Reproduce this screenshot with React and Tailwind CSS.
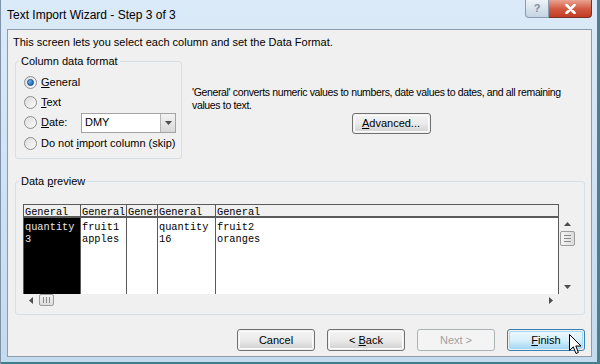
import React from 'react';

const ui = { fontFamily: '"Liberation Sans", Arial, sans-serif' };
const mono = { fontFamily: '"Liberation Mono", "Courier New", monospace' };

const Radio = ({ checked }) => (
  <span className="w-[13px] h-[13px] rounded-full border border-[#8f8f8f] bg-gradient-to-br from-[#dcdcdc] to-[#fbfbfb] flex items-center justify-center shrink-0">
    {checked && <span className="w-[7px] h-[7px] rounded-full bg-gradient-to-br from-[#7fc3f5] to-[#0f5aa8] border border-[#0b4b8c]" />}
  </span>
);

const Btn = ({ children, variant }) => {
  if (variant === 'disabled') {
    return (
      <div className="w-[78px] h-[22px] rounded-[3px] border border-[#adb2b5] bg-[#f4f4f4] flex items-center justify-center text-[11px] text-[#a0a0a0]">
        <span>{children}</span>
      </div>
    );
  }
  if (variant === 'focus') {
    return (
      <div className="w-[78px] h-[22px] rounded-[3px] border border-[#3c7fb1] p-[1px] flex">
        <div className="flex-1 rounded-[2px] border border-[#a8d8f7] bg-gradient-to-b from-[#eaf6fd] via-[#d9f0fc] to-[#a7d9f5] flex items-center justify-center text-[11px] text-black">
          <span>{children}</span>
        </div>
      </div>
    );
  }
  return (
    <div className="w-[78px] h-[22px] rounded-[3px] border border-[#707070] p-[1px] flex">
      <div className="flex-1 rounded-[2px] border border-[#fbfbfb] bg-gradient-to-b from-[#f2f2f2] via-[#ebebeb] to-[#d4d4d4] flex items-center justify-center text-[11px] text-black">
        <span>{children}</span>
      </div>
    </div>
  );
};

const Arrow = ({ dir }) => {
  const pts = {
    up: '0,4 3.5,0 7,4',
    down: '0,0 3.5,4 7,0',
    left: '4,0 0,3.5 4,7',
    right: '0,0 4,3.5 0,7',
  }[dir];
  const vertical = dir === 'up' || dir === 'down';
  return (
    <svg width={vertical ? 7 : 4} height={vertical ? 4 : 7} viewBox={vertical ? '0 0 7 4' : '0 0 4 7'}>
      <polygon points={pts} fill="#4d4d4d" />
    </svg>
  );
};

const columns = [
  { w: 'w-[57px]', head: 'General', rows: ['quantity', '3'], dark: true },
  { w: 'w-[46px]', head: 'General', rows: ['fruit1', 'apples'] },
  { w: 'w-[31px]', head: 'Gener', rows: ['', ''] },
  { w: 'w-[58px]', head: 'General', rows: ['quantity', '16'] },
  { w: 'flex-1', head: 'General', rows: ['fruit2', 'oranges'] },
];

export default function App() {
  return (
    <div className="w-[600px] h-[364px] overflow-hidden relative flex flex-col bg-gradient-to-b from-[#dbeaf8] to-[#c4daef] border-l border-[#7f93a8] border-r-[3px] border-r-[#4b7f8d]" style={ui}>
      {/* title bar */}
      <div className="h-[29px] flex justify-between items-start shrink-0">
        <div className="h-[29px] flex items-center pl-[6px] text-[12px] text-black">Text Import Wizard - Step 3 of 3</div>
        <div className="flex pr-[5px]">
          <div className="w-[24px] h-[18px] rounded-bl-[4px] border border-t-0 border-[#8a9cb0] bg-gradient-to-b from-[#eef3f8] to-[#c4d3e2] flex items-center justify-center text-[11px] text-[#7d8ea0] font-bold">?</div>
          <div className="w-[43px] h-[18px] rounded-br-[4px] border border-t-0 border-l-0 border-[#7a3025] bg-gradient-to-b from-[#e8a394] via-[#d45b44] to-[#c23b22] flex items-center justify-center">
            <svg width="11" height="10" viewBox="0 0 11 10">
              <path d="M1.5 1 L9.5 9 M9.5 1 L1.5 9" stroke="#ffffff" strokeWidth="2.6" strokeLinecap="round" />
            </svg>
          </div>
        </div>
      </div>

      {/* client */}
      <div className="ml-[6px] mr-[5px] h-[328px] shrink-0 border border-[#8d9cab] bg-[#f0f0f0] flex flex-col text-[11px] text-black">
        <div className="pl-[5px] pt-[5px] leading-[15px]">This screen lets you select each column and set the Data Format.</div>

        <div className="flex mt-[4px]">
          <fieldset className="ml-[7px] w-[167px] h-[105px] border border-[#d5dfe5] rounded-[3px] shrink-0">
            <legend className="ml-[3px] px-[2px] leading-[15px]">Column data format</legend>
            <div className="flex flex-col pl-[8px] pt-[4px]">
              <div className="h-[19px] flex items-center gap-[4px]">
                <Radio checked />
                <span><u>G</u>eneral</span>
              </div>
              <div className="h-[20px] flex items-center gap-[4px]">
                <Radio />
                <span><u>T</u>ext</span>
              </div>
              <div className="h-[21px] flex items-center gap-[4px]">
                <Radio />
                <span className="w-[36px]"><u>D</u>ate:</span>
                <div className="w-[95px] h-[20px] border border-[#a3a3a3] bg-white flex">
                  <div className="flex-1 pl-[3px] flex items-center text-[11px]">DMY</div>
                  <div className="w-[15px] border-l border-[#b5b5b5] bg-gradient-to-b from-[#f3f3f3] to-[#d8d8d8] flex items-center justify-center">
                    <Arrow dir="down" />
                  </div>
                </div>
              </div>
              <div className="h-[20px] flex items-center gap-[4px]">
                <Radio />
                <span>Do not <u>i</u>mport column (skip)</span>
              </div>
            </div>
          </fieldset>

          <div className="ml-[10px] flex-1 flex flex-col pt-[32px]">
            <div className="leading-[13px] text-[10.5px] tracking-[-0.35px]">'General' converts numeric values to numbers, date values to dates, and all remaining values to text.</div>
            <div className="self-center mt-[1px] -ml-[1px]">
              <div className="w-[79px] h-[21px] rounded-[3px] border border-[#707070] p-[1px] flex">
                <div className="flex-1 rounded-[2px] border border-[#fbfbfb] bg-gradient-to-b from-[#f2f2f2] via-[#ebebeb] to-[#d4d4d4] flex items-center justify-center">
                  <span><u>A</u>dvanced...</span>
                </div>
              </div>
            </div>
          </div>
        </div>

        <fieldset className="ml-[7px] mt-[15px] w-[570px] h-[141px] border border-[#d5dfe5] rounded-[3px] shrink-0">
          <legend className="ml-[3px] px-[2px] leading-[15px]">Data <u>p</u>review</legend>
          <div className="pl-[7px] pt-[15px] flex flex-col">
            <div className="flex">
              <div className="w-[536px] h-[90px] border-l border-r border-t border-[#5a5a5a] flex bg-white" style={mono}>
                {columns.map((c, i) => (
                  <div key={i} className={`${c.w} flex flex-col ${i < columns.length - 1 ? 'border-r border-[#5a5a5a]' : ''}`}>
                    <div className="h-[13px] border-b-2 border-[#5a5a5a] bg-[#f0f0f0] text-[10.3px] leading-[14px] pl-[1px] overflow-hidden whitespace-nowrap">{c.head}</div>
                    <div className={`flex-1 pt-[3px] pl-[1px] text-[10.3px] leading-[12px] whitespace-pre ${c.dark ? 'bg-black text-[#e8e8e8]' : 'bg-white text-black'}`}>
                      {c.rows.map((r, j) => (
                        <div key={j}>{r}</div>
                      ))}
                    </div>
                  </div>
                ))}
              </div>
              <div className="w-[17px] flex flex-col">
                <div className="h-[13px]" />
                <div className="flex-1 flex flex-col items-center">
                  <div className="h-[14px] flex items-center"><Arrow dir="up" /></div>
                  <div className="w-[15px] h-[15px] rounded-[2px] border border-[#9c9c9c] bg-gradient-to-r from-[#f4f4f4] to-[#dcdcdc] flex flex-col items-center justify-center gap-[2px]">
                    <span className="w-[7px] h-px bg-[#8a8a8a]" />
                    <span className="w-[7px] h-px bg-[#8a8a8a]" />
                    <span className="w-[7px] h-px bg-[#8a8a8a]" />
                  </div>
                  <div className="flex-1" />
                  <div className="h-[14px] flex items-center"><Arrow dir="down" /></div>
                </div>
              </div>
            </div>
            <div className="w-[536px] h-[12px] flex items-center">
              <div className="w-[16px] flex justify-center"><Arrow dir="left" /></div>
              <div className="w-[15px] h-[12px] rounded-[2px] border border-[#9c9c9c] bg-gradient-to-b from-[#f4f4f4] to-[#dcdcdc] flex items-center justify-center gap-[2px]">
                <span className="w-px h-[6px] bg-[#8a8a8a]" />
                <span className="w-px h-[6px] bg-[#8a8a8a]" />
                <span className="w-px h-[6px] bg-[#8a8a8a]" />
              </div>
              <div className="flex-1" />
              <div className="w-[16px] flex justify-center"><Arrow dir="right" /></div>
            </div>
          </div>
        </fieldset>

        <div className="flex justify-end gap-[12px] pr-[6px] mt-[14px]">
          <Btn>Cancel</Btn>
          <Btn>&lt; <u>B</u>ack</Btn>
          <Btn variant="disabled">Next &gt;</Btn>
          <Btn variant="focus"><u>F</u>inish</Btn>
        </div>
      </div>

      <div className="flex-1 border-b-2 border-[#3f7f8d]" />

      {/* mouse pointer */}
      <svg className="absolute left-[568px] top-[334px]" width="13" height="21" viewBox="0 0 13 21">
        <path d="M0.5 0.5 L0.5 16.5 L4.3 12.8 L7 19.5 L9.4 18.5 L6.8 12 L12 12 Z" fill="#ffffff" stroke="#000000" strokeWidth="1" strokeLinejoin="round" />
      </svg>
    </div>
  );
}
